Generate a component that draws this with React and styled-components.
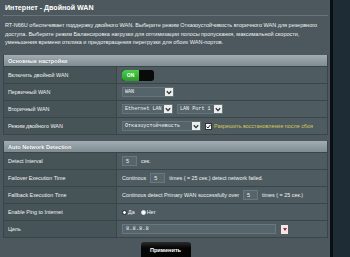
import styled, { createGlobalStyle } from 'styled-components'

const GlobalStyle = createGlobalStyle`
  html, body {
    margin: 0;
    padding: 0;
    background: #1e2c36;
    height: 257px;
    overflow: hidden;
  }
  body {
    font-family: 'Liberation Sans', Arial, sans-serif;
    color: #ffffff;
  }
`

const Page = styled.div`
  display: flex;
  height: 257px;
`

const Panel = styled.div`
  width: 325px;
  padding: 0 2px 0 3px;
  background: #4c585d;
  border-right: 3px solid #0b0e10;
  display: flex;
  flex-direction: column;
`

const Title = styled.div`
  height: 16px;
  padding: 3px 2px 0;
  box-sizing: border-box;
  border-bottom: 1px solid #687479;
  font-size: 7.1px;
  font-weight: 700;
  line-height: 10px;
`

const Description = styled.div`
  padding: 5px 2px 0;
  height: 39px;
  box-sizing: border-box;
  font-size: 5.5px;
  line-height: 8.5px;
  color: #eef2f3;
  white-space: nowrap;
`

const Table = styled.div`
  display: flex;
  flex-direction: column;
  border: 1px solid #3a4549;
  border-top: none;
  margin-bottom: ${p => p.$gap || 0}px;
`

const Header = styled.div`
  height: 11px;
  padding-left: 4px;
  display: flex;
  align-items: center;
  background: linear-gradient(#a1adb2, #7f8c91);
  font-size: 5.6px;
  font-weight: 700;
  color: #ffffff;
  text-shadow: 0 0 1px #55636a;
`

const Row = styled.div`
  height: 17px;
  display: grid;
  grid-template-columns: 113px 1fr;
  border-top: 1px solid #3a4549;
  box-sizing: border-box;
`

const Label = styled.div`
  display: flex;
  align-items: center;
  padding-left: 4px;
  background: #465357;
  font-size: 5.4px;
  color: #eef2f3;
  border-right: 1px solid #3a4549;
`

const Value = styled.div`
  display: flex;
  align-items: center;
  gap: 4px;
  padding-left: 5px;
  background: #4e5c61;
  font-size: 5.4px;
  color: #eef2f3;
  white-space: nowrap;
`

const Toggle = styled.div`
  display: flex;
  width: 32px;
  height: 11px;
  border-radius: 3px;
  overflow: hidden;
  background: #0a0a0a;
`

const ToggleOn = styled.div`
  width: 17px;
  display: flex;
  align-items: center;
  justify-content: center;
  background: linear-gradient(#4bd04b, #2a9a2a);
  font-size: 5px;
  font-weight: 700;
  color: #fff;
  border-radius: 3px 0 0 3px;
`

const SelectBox = styled.div`
  display: flex;
  align-items: stretch;
  width: ${p => p.$w}px;
  height: 10px;
  box-sizing: border-box;
  border: 1px solid #66757a;
  background: #55646a;
  font-family: 'Liberation Mono', 'Courier New', monospace;
  font-size: 5.1px;
  color: #f2f4f5;
`

const SelectText = styled.div`
  flex: 1;
  display: flex;
  align-items: center;
  padding-left: 2px;
  overflow: hidden;
`

const Arrow = styled.div`
  width: 8px;
  display: flex;
  align-items: center;
  justify-content: center;
  background: #eceeee;
`

const Check = styled.div`
  width: 5px;
  height: 5px;
  background: #f4f4f4;
  border: 1px solid #333;
  display: flex;
  align-items: center;
  justify-content: center;
`

const Yellow = styled.span`
  color: #d3c85a;
  margin-left: -2px;
`

const Input = styled.div`
  width: ${p => p.$w}px;
  height: 10px;
  box-sizing: border-box;
  border: 1px solid #6a787d;
  background: #56656b;
  display: flex;
  align-items: center;
  padding-left: 3px;
  font-family: ${p => (p.$mono ? "'Liberation Mono', monospace" : 'inherit')};
  color: #f2f4f5;
  font-size: 5.4px;
`

const Radio = styled.span`
  display: inline-flex;
  align-items: center;
  gap: 1px;
  margin-right: 2px;
`

const Dot = styled.span`
  width: 5px;
  height: 5px;
  border-radius: 50%;
  background: #fafafa;
  box-sizing: border-box;
  border: ${p => (p.$on ? '1.5px solid #222' : '1px solid #ddd')};
`

const PinkButton = styled.div`
  width: 7px;
  height: 9px;
  background: #f1e6e8;
  display: flex;
  align-items: center;
  justify-content: center;
  margin-left: 1px;
`

const Footer = styled.div`
  flex: 1;
  display: flex;
  justify-content: center;
  align-items: flex-end;
`

const ApplyButton = styled.div`
  width: 50px;
  height: 15px;
  border-radius: 3px 3px 0 0;
  background: linear-gradient(#2b2b2b, #050505 40%);
  display: flex;
  align-items: center;
  justify-content: center;
  font-size: 5.6px;
  font-weight: 700;
  color: #fff;
`

const Chevron = () => (
  <svg width="6" height="5" viewBox="0 0 6 5">
    <path d="M0.8 1.2 L3 3.6 L5.2 1.2" fill="none" stroke="#2a3236" strokeWidth="1.3" />
  </svg>
)

const Select = ({ w, children }) => (
  <SelectBox $w={w}>
    <SelectText>{children}</SelectText>
    <Arrow>
      <Chevron />
    </Arrow>
  </SelectBox>
)

export default function App() {
  return (
    <>
      <GlobalStyle />
      <Page>
        <Panel>
          <Title>Интернет - Двойной WAN</Title>
          <Description>
            RT-N66U обеспечивает поддержку двойного WAN. Выберите режим Отказоустойчивость вторичного WAN для резервного
            <br />
            доступа. Выберите режим Балансировка нагрузки для оптимизации полосы пропускания, максимальной скорости,
            <br />
            уменьшения времени отклика и предотвращения перегрузки для обоих WAN-портов.
          </Description>

          <Table $gap={6}>
            <Header>Основные настройки</Header>
            <Row>
              <Label>Включить двойной WAN</Label>
              <Value>
                <Toggle>
                  <ToggleOn>ON</ToggleOn>
                </Toggle>
              </Value>
            </Row>
            <Row>
              <Label>Первичный WAN</Label>
              <Value>
                <Select w={52}>WAN</Select>
              </Value>
            </Row>
            <Row>
              <Label>Вторичный WAN</Label>
              <Value>
                <Select w={51}>Ethernet LAN</Select>
                <Select w={46}>LAN Port 1</Select>
              </Value>
            </Row>
            <Row>
              <Label>Режим двойного WAN</Label>
              <Value>
                <Select w={79}>Отказоустойчивость</Select>
                <Check>
                  <svg width="5" height="5" viewBox="0 0 5 5">
                    <path d="M0.6 2.6 L2 4 L4.5 0.8" fill="none" stroke="#222" strokeWidth="1" />
                  </svg>
                </Check>
                <Yellow>Разрешить восстановление после сбоя</Yellow>
              </Value>
            </Row>
          </Table>

          <Table>
            <Header>Auto Network Detection</Header>
            <Row>
              <Label>Detect Interval</Label>
              <Value>
                <Input $w={15}>5</Input>
                сек.
              </Value>
            </Row>
            <Row>
              <Label>Failover Execution Time</Label>
              <Value>
                Continous
                <Input $w={15}>5</Input>
                times ( = 25 сек.) detect network failed.
              </Value>
            </Row>
            <Row>
              <Label>Fallback Execution Time</Label>
              <Value>
                Continous detect Primary WAN successfully over
                <Input $w={15}>5</Input>
                times ( = 25 сек.)
              </Value>
            </Row>
            <Row>
              <Label>Enable Ping to Internet</Label>
              <Value>
                <Radio>
                  <Dot $on />
                  Да
                </Radio>
                <Radio>
                  <Dot />
                  Нет
                </Radio>
              </Value>
            </Row>
            <Row>
              <Label>Цель</Label>
              <Value>
                <Input $w={154} $mono>
                  8.8.8.8
                </Input>
                <PinkButton>
                  <svg width="4" height="3" viewBox="0 0 4 3">
                    <path d="M0 0 H4 L2 3 Z" fill="#b4202a" />
                  </svg>
                </PinkButton>
              </Value>
            </Row>
          </Table>

          <Footer>
            <ApplyButton>Применить</ApplyButton>
          </Footer>
        </Panel>
      </Page>
    </>
  )
}
